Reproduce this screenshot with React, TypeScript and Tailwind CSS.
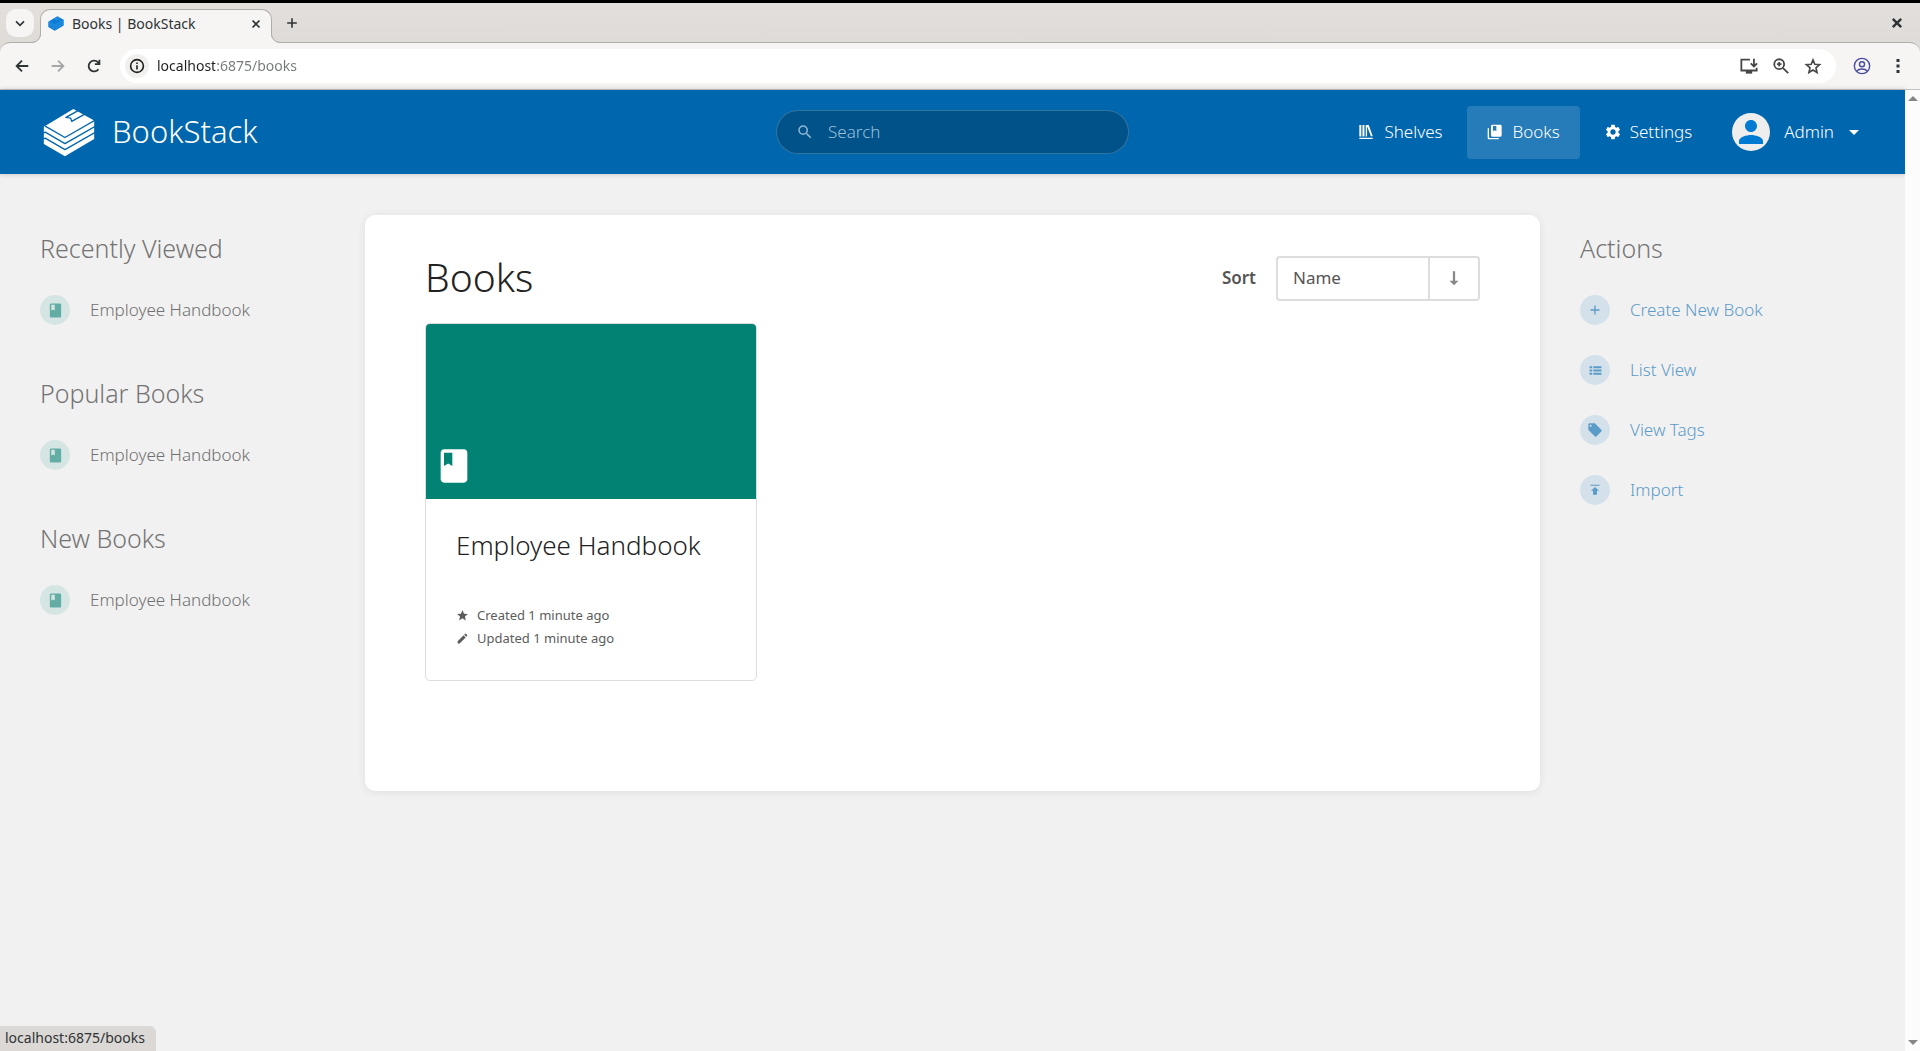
import type { ReactNode } from "react";

type IconProps = { d: string; className?: string };

const paths = {
  book: "M18 2H6c-1.100 0-2 .9-2 2v16c0 1.100.9 2 2 2h12c1.100 0 2-.9 2-2V4c0-1.100-.9-2-2-2zM6 4h5v8l-2.500-1.500L6 12V4z",
  books:
    "M3 7c0-.55-.45-1-1-1s-1 .45-1 1v14c0 1.100.9 2 2 2h14c.55 0 1-.45 1-1s-.45-1-1-1H4c-.55 0-1-.45-1-1V7zM20 1H8c-1.100 0-2 .9-2 2v14c0 1.100.9 2 2 2h12c1.100 0 2-.9 2-2V3c0-1.100-.9-2-2-2zM9 3h5v8l-2.500-1.500L9 11V3z",
  shelves:
    "M2 20.500h20v2H2zM2 1.500h3v17.200H2zM6.700 1.500h3v17.200h-3zM11.600 1.500h2v17.200h-2zM13.600 1.500h2.500l5.900 16.600-2.500.8-5.900-15.400z",
  cog: "M19.140 12.940c.04-.3.060-.61.060-.94 0-.32-.02-.64-.07-.94l2.030-1.580c.18-.14.230-.41.120-.61l-1.920-3.320c-.12-.22-.37-.29-.59-.22l-2.390.96c-.5-.38-1.030-.7-1.620-.94l-.36-2.540c-.04-.24-.24-.41-.48-.41h-3.840c-.24 0-.43.170-.47.410l-.36 2.540c-.59.240-1.130.570-1.620.940l-2.390-.96c-.22-.08-.47 0-.59.220L2.740 8.870c-.12.210-.08.470.120.610l2.030 1.580c-.05.3-.09.630-.09.940s.02.640.070.940l-2.030 1.580c-.18.140-.23.410-.12.610l1.920 3.320c.12.220.37.290.59.220l2.390-.96c.5.380 1.030.7 1.620.940l.36 2.540c.05.240.24.410.48.410h3.840c.24 0 .44-.17.470-.41l.36-2.540c.59-.24 1.130-.56 1.620-.94l2.390.96c.22.080.47 0 .59-.22l1.920-3.320c.12-.22.070-.47-.12-.61l-2.010-1.580zM12 15.600c-1.980 0-3.600-1.620-3.600-3.600s1.620-3.600 3.600-3.600 3.600 1.620 3.600 3.600-1.620 3.600-3.600 3.600z",
  caret: "M7 10l5 5 5-5z",
  search:
    "M15.500 14h-.79l-.28-.27A6.471 6.471 0 0 0 16 9.500 6.500 6.500 0 1 0 9.500 16c1.610 0 3.090-.59 4.230-1.570l.27.280v.79l5 4.990L20.490 19l-4.990-5zm-6 0C7.010 14 5 11.990 5 9.500S7.010 5 9.500 5 14 7.010 14 9.500 11.990 14 9.500 14z",
  person:
    "M12 12c2.210 0 4-1.790 4-4s-1.790-4-4-4-4 1.790-4 4 1.790 4 4 4zm0 2c-2.670 0-8 1.340-8 4v2h16v-2c0-2.660-5.330-4-8-4z",
  star: "M12 17.270 18.180 21l-1.640-7.030L22 9.240l-7.190-.61L12 2 9.190 8.630 2 9.240l5.460 4.730L5.820 21z",
  edit: "M3 17.250V21h3.750L17.810 9.940l-3.750-3.750L3 17.250zM20.710 7.040a.996.996 0 0 0 0-1.410l-2.340-2.340a.996.996 0 0 0-1.410 0l-1.830 1.830 3.750 3.750 1.830-1.830z",
  add: "M21 13.300h-7.700V21h-2.600v-7.700H3v-2.600h7.700V3h2.600v7.700H21z",
  list: "M1 14h5v-4H1v4zm0 6h5v-4H1v4zM1 8h5V4H1v4zm7 6h15v-4H8v4zm0 6h15v-4H8v4zM8 4v4h15V4H8z",
  tag: "M21.410 11.580l-9-9C12.050 2.220 11.550 2 11 2H4c-1.100 0-2 .9-2 2v7c0 .55.220 1.050.590 1.420l9 9c.36.360.86.580 1.410.580.55 0 1.050-.22 1.410-.59l7-7c.37-.36.590-.86.590-1.410 0-.55-.23-1.060-.59-1.420zM5.500 7C4.670 7 4 6.330 4 5.500S4.670 4 5.500 4 7 4.670 7 5.500 6.330 7 5.500 7z",
  upload: "M3 3.500v-2.200h18v2.200H3zM4 13.500h4v8h8v-8h4l-8-7.500z",
  down: "M10.500 3h3v12.500H18L12 21.500 6 15.500h4.500z",
};

function Icon({ d, className }: IconProps) {
  return (
    <svg viewBox="0 0 24 24" fill="currentColor" aria-hidden="true" className={className}>
      <path d={d} />
    </svg>
  );
}

function Logo({ className, line, body }: { className: string; line: string; body: string }) {
  return (
    <svg viewBox="0 0 154 146" aria-hidden="true" className={className}>
      <path d="M2 56 L90 3 L152 37 L152 92 L65 144 L2 107 Z" fill={body} />
      <g fill="none" stroke={line} strokeWidth="4" strokeLinejoin="round">
        <path d="M6 54 L65 88 L154 37" />
        <path d="M0 75 L6 72 L65 106 L154 55" />
        <path d="M0 93 L6 90 L65 124 L154 73" />
        <path d="M104 8 L68 28 L82 30 L85 40 L124 18" />
      </g>
    </svg>
  );
}

function Stroke({ children, className }: { children: ReactNode; className: string }) {
  return (
    <svg viewBox="0 0 20 20" fill="none" stroke="currentColor" strokeWidth="2" aria-hidden="true" className={className}>
      {children}
    </svg>
  );
}

function TabFlare({ d, edge, className }: { d: string; edge: string; className: string }) {
  return (
    <svg viewBox="0 0 10 10" aria-hidden="true" className={className}>
      <path d={d} fill="#f6f5f4" />
      <path d={edge} fill="none" stroke="#b0aca9" />
    </svg>
  );
}

function BrowserChrome() {
  return (
    <div className="shrink-0 border-t-[3px] border-black bg-linear-to-b from-[#e3dfdc] to-[#dad6d2] font-['Noto_Sans',sans-serif] text-[#2e3436]">
      <div className="flex h-[39px] items-end">
        <button aria-label="Search tabs" className="mb-[5px] ml-1.5 grid size-7 place-items-center rounded-[10px] bg-[#f6f5f4]">
          <Stroke className="size-4">
            <path d="M5 8l5 5 5-5" />
          </Stroke>
        </button>
        <div className="relative ml-1.5 -mb-px flex h-[34px] w-[232px] items-center rounded-t-[10px] border border-b-0 border-[#b0aca9] bg-[#f6f5f4] pr-[7px] pb-1.5 pl-[7px]">
          <TabFlare
            className="absolute bottom-0 -left-2.5 size-2.5"
            d="M0 10 C6 10 10 6 10 0 H10 V10 Z M10 0 H10 V10 H10 Z"
            edge="M0 9.500 C6 9.500 9.500 6 9.500 0"
          />
          <TabFlare
            className="absolute -right-2.5 bottom-0 size-2.5"
            d="M10 10 C4 10 0 6 0 0 V10 Z"
            edge="M10 9.500 C4 9.500 0.500 6 0.500 0"
          />
          <Logo className="h-[15px] w-4" line="#58b4ee" body="#0a7cd6" />
          <span className="ml-2 flex-1 text-sm">Books | BookStack</span>
          <button aria-label="Close tab" className="grid size-4 place-items-center">
            <Stroke className="size-3.5">
              <path d="M5 5l10 10M15 5L5 15" strokeWidth="2.500" />
            </Stroke>
          </button>
        </div>
        <button aria-label="New tab" className="mb-[9px] ml-2.5 grid size-5 place-items-center">
          <Stroke className="size-4">
            <path d="M10 4v12M4 10h12" />
          </Stroke>
        </button>
        <button aria-label="Close window" className="mr-[15px] mb-[11px] ml-auto grid size-4 place-items-center">
          <Stroke className="size-3.5">
            <path d="M4 4l12 12M16 4L4 16" strokeWidth="3.500" />
          </Stroke>
        </button>
      </div>
      <div className="flex h-12 items-center rounded-t-[10px] border-t border-b border-t-[#b0aca9] border-b-[#c5c3c1] bg-[#f6f5f4] px-3">
        <button aria-label="Back" className="grid size-5 place-items-center">
          <Stroke className="size-[18px]">
            <path d="M17 10H4M10 4l-6 6 6 6" />
          </Stroke>
        </button>
        <button aria-label="Forward" disabled className="ml-4 grid size-5 place-items-center text-[#a5a6a6]">
          <Stroke className="size-[18px]">
            <path d="M3 10h13M10 4l6 6-6 6" />
          </Stroke>
        </button>
        <button aria-label="Reload" className="ml-4 grid size-5 place-items-center">
          <Stroke className="size-[18px]">
            <path d="M15 13.500A6 6 0 1 1 14.500 6L16 7.500M16 3v5h-5" />
          </Stroke>
        </button>
        <div className="ml-4 flex h-[34px] flex-1 items-center rounded-full bg-white pr-[13px] pl-[5px] text-[#474747]">
          <button aria-label="View site information" className="grid size-6 place-items-center rounded-full bg-[#f1f0ef] text-[#1f1f1f]">
            <Stroke className="size-4">
              <circle cx="10" cy="10" r="8" />
              <path d="M10 9v5.500M10 5.500v2" />
            </Stroke>
          </button>
          <input
            aria-label="Address"
            defaultValue="localhost:6875/books"
            className="ml-2 min-w-0 flex-1 bg-[linear-gradient(to_right,#1f1f1f_58px,#75797b_58px)] bg-clip-text text-sm text-transparent outline-none"
          />
          <button aria-label="Install app" className="ml-4 grid size-5 place-items-center">
            <Stroke className="size-[18px]">
              <path d="M11 3H1.500v12h17v-3M15.500 2v8M12 7l3.500 3.500L19 7" />
              <path d="M6.500 17h7" strokeWidth="3" />
            </Stroke>
          </button>
          <button aria-label="Zoom" className="ml-3 grid size-5 place-items-center">
            <Stroke className="size-[18px]">
              <circle cx="8" cy="8" r="5.500" />
              <path d="M12 12l6 6M8 5.500v5M5.500 8h5" />
            </Stroke>
          </button>
          <button aria-label="Bookmark this tab" className="ml-3 grid size-5 place-items-center">
            <Stroke className="size-[18px]">
              <path d="M10 3.200l2 4.900 5.300.4-4 3.500 1.200 5.200L10 14.400l-4.500 2.800L6.700 12l-4-3.500 5.300-.4z" strokeWidth="1.800" />
            </Stroke>
          </button>
        </div>
        <button aria-label="Profile" className="ml-4 grid size-5 place-items-center text-[#4a4da0]">
          <Stroke className="size-[18px]">
            <circle cx="10" cy="10" r="8.500" strokeWidth="1.600" />
            <circle cx="10" cy="8" r="2.800" strokeWidth="1.600" />
            <path d="M4 15.500c3-3 9-3 12 0" strokeWidth="1.600" />
          </Stroke>
        </button>
        <button aria-label="Menu" className="ml-4 grid size-5 place-items-center">
          <svg viewBox="0 0 20 20" fill="currentColor" aria-hidden="true" className="size-5">
            <path d="M8.500 3h3v3h-3zM8.500 8.500h3v3h-3zM8.500 14h3v3h-3z" />
          </svg>
        </button>
      </div>
    </div>
  );
}

function NavLink({ icon, label, active }: { icon: string; label: string; active?: boolean }) {
  return (
    <a
      href={"#" + label}
      className={
        active
          ? "flex h-[53px] items-center rounded-sm bg-white/15 px-5"
          : "flex h-[53px] items-center rounded-sm px-5"
      }
    >
      <Icon d={icon} className={label === "Settings" ? "mr-2 size-[18px]" : "mr-2.5 size-4"} />
      {label}
    </a>
  );
}

function Header() {
  return (
    <header className="grid h-[84px] shrink-0 grid-cols-[1fr_auto_1fr] items-center bg-[#0066ad] px-10 text-[17px] font-[350] text-white shadow-[0_0_6px_rgba(0,0,0,0.2)]">
      <a href="#home" className="flex items-center">
        <Logo className="ml-[3px] h-[49px] w-[52px]" line="#0066ad" body="#fff" />
        <span className="ml-[17px] pb-0.5 text-[31px] leading-10">BookStack</span>
      </a>
      <form role="search" className="flex h-11 w-[353px] items-center rounded-full border border-white/20 bg-[#005288] pr-5 pl-[19px] text-[#8fb8d6]">
        <button type="button" aria-label="Search" className="mr-3.5">
          <Icon d={paths.search} className="size-[18px]" />
        </button>
        <input type="text" aria-label="Search" placeholder="Search" className="min-w-0 flex-1 outline-none placeholder:text-[#99bfdb]" />
      </form>
      <nav className="flex items-center justify-end gap-1">
        <NavLink icon={paths.shelves} label="Shelves" />
        <NavLink icon={paths.books} label="Books" active />
        <NavLink icon={paths.cog} label="Settings" />
        <button className="ml-4 flex items-center">
          <span className="grid size-[38px] place-items-center overflow-hidden rounded-full bg-[#eee] text-[#007ad3]">
            <Icon d={paths.person} className="size-9" />
          </span>
          <span className="ml-3.5">Admin</span>
          <Icon d={paths.caret} className="-mr-px ml-2 size-6" />
        </button>
      </nav>
    </header>
  );
}

function SideSection({ title }: { title: string }) {
  return (
    <section>
      <h2 className="text-[25px] leading-8 font-[350] text-[#747474]">{title}</h2>
      <a href="#employee-handbook" className="mt-[23px] mb-11 flex h-[46px] items-center text-[17px] font-[350] text-[#707070]">
        <span className="mr-5 grid size-[30px] place-items-center rounded-full bg-[#d5e5e3] text-[#63ada4]">
          <Icon d={paths.book} className="size-[17px]" />
        </span>
        Employee Handbook
      </a>
    </section>
  );
}

const actions = [
  { label: "Create New Book", icon: paths.add, size: "size-3" },
  { label: "List View", icon: paths.list, size: "size-[13px]" },
  { label: "View Tags", icon: paths.tag, size: "size-4" },
  { label: "Import", icon: paths.upload, size: "size-3" },
];

export default function App() {
  return (
    <div className="relative flex min-h-screen flex-col">
      <BrowserChrome />
      <div className="flex flex-1">
        <div className="min-w-0 flex-1 bg-[#f1f1f1] font-['Noto_Sans',sans-serif]">
          <Header />
          <div className="grid grid-cols-[57fr_235fr_57fr] items-start gap-10 px-10 pt-[41px]">
            <aside className="pt-[17px]">
              <SideSection title="Recently Viewed" />
              <SideSection title="Popular Books" />
              <SideSection title="New Books" />
            </aside>
            <main className="rounded-[10px] bg-white px-[60px] pt-10 pb-[110px] shadow-[0_1px_8px_rgba(0,0,0,0.08)]">
              <div className="flex items-center justify-between">
                <h1 className="pb-0.5 text-[39px] leading-[44px] font-[350] text-[#222]">Books</h1>
                <form className="flex items-center text-[17px] text-[#555]">
                  <label htmlFor="sort" className="mr-5 font-semibold">
                    Sort
                  </label>
                  <div className="flex h-[45px] rounded-sm border-2 border-[#ddd]">
                    <select id="sort" className="w-[150px] appearance-none pl-[15px] outline-none">
                      <option>Name</option>
                    </select>
                    <button type="button" aria-label="Sort direction" className="grid w-[50px] place-items-center border-l-2 border-[#ddd] text-[#888]">
                      <Icon d={paths.down} className="size-[18px]" />
                    </button>
                  </div>
                </form>
              </div>
              <div className="mt-[22px] grid grid-cols-[repeat(auto-fill,minmax(300px,332px))]">
                <a href="#employee-handbook" className="overflow-hidden rounded-[5px] border border-[#ddd]">
                  <div className="flex h-[175px] items-end bg-[#018273] px-2 pb-[13px] text-white">
                    <Icon d={paths.book} className="size-10" />
                  </div>
                  <div className="px-[30px] pt-7 pb-[30px]">
                    <h2 className="text-[26px] leading-9 font-[350] text-[#222]">Employee Handbook</h2>
                    <div className="mt-[41px] text-[13px] leading-[23px] text-[#5c5c5c]">
                      <p className="flex items-center">
                        <Icon d={paths.star} className="mr-2 size-[13px]" />
                        Created 1 minute ago
                      </p>
                      <p className="flex items-center">
                        <Icon d={paths.edit} className="mr-2 size-[13px]" />
                        Updated 1 minute ago
                      </p>
                    </div>
                  </div>
                </a>
              </div>
            </main>
            <aside className="pt-[17px]">
              <h2 className="text-[25px] leading-8 font-[350] text-[#747474]">Actions</h2>
              <div className="mt-[23px]">
                {actions.map((a) => (
                  <a key={a.label} href={"#" + a.label} className="mb-3.5 flex h-[46px] items-center text-[17px] font-[350] text-[#5b9bc8]">
                    <span className="mr-5 grid size-[30px] place-items-center rounded-full bg-[#d4e1ea]">
                      <Icon d={a.icon} className={a.size} />
                    </span>
                    {a.label}
                  </a>
                ))}
              </div>
            </aside>
          </div>
        </div>
        <div className="flex w-[15px] flex-col items-center justify-between bg-[#fcfcfc] py-1.5 text-[#858585]">
          <button aria-label="Scroll up" className="grid h-[5px] place-items-center">
            <svg viewBox="0 0 10 5" fill="currentColor" aria-hidden="true" className="h-[5px] w-2.5">
              <path d="M0 5l5-5 5 5z" />
            </svg>
          </button>
          <button aria-label="Scroll down" className="grid h-[5px] place-items-center">
            <svg viewBox="0 0 10 5" fill="currentColor" aria-hidden="true" className="h-[5px] w-2.5">
              <path d="M0 0l5 5 5-5z" />
            </svg>
          </button>
        </div>
      </div>
      <div className="absolute bottom-0 left-0 rounded-tr-md bg-[#dcd8d5] pt-0.5 pr-[11px] pb-[3px] pl-[5px] font-['Noto_Sans',sans-serif] text-sm text-[#2e3436]">
        localhost:6875/books
      </div>
    </div>
  );
}
